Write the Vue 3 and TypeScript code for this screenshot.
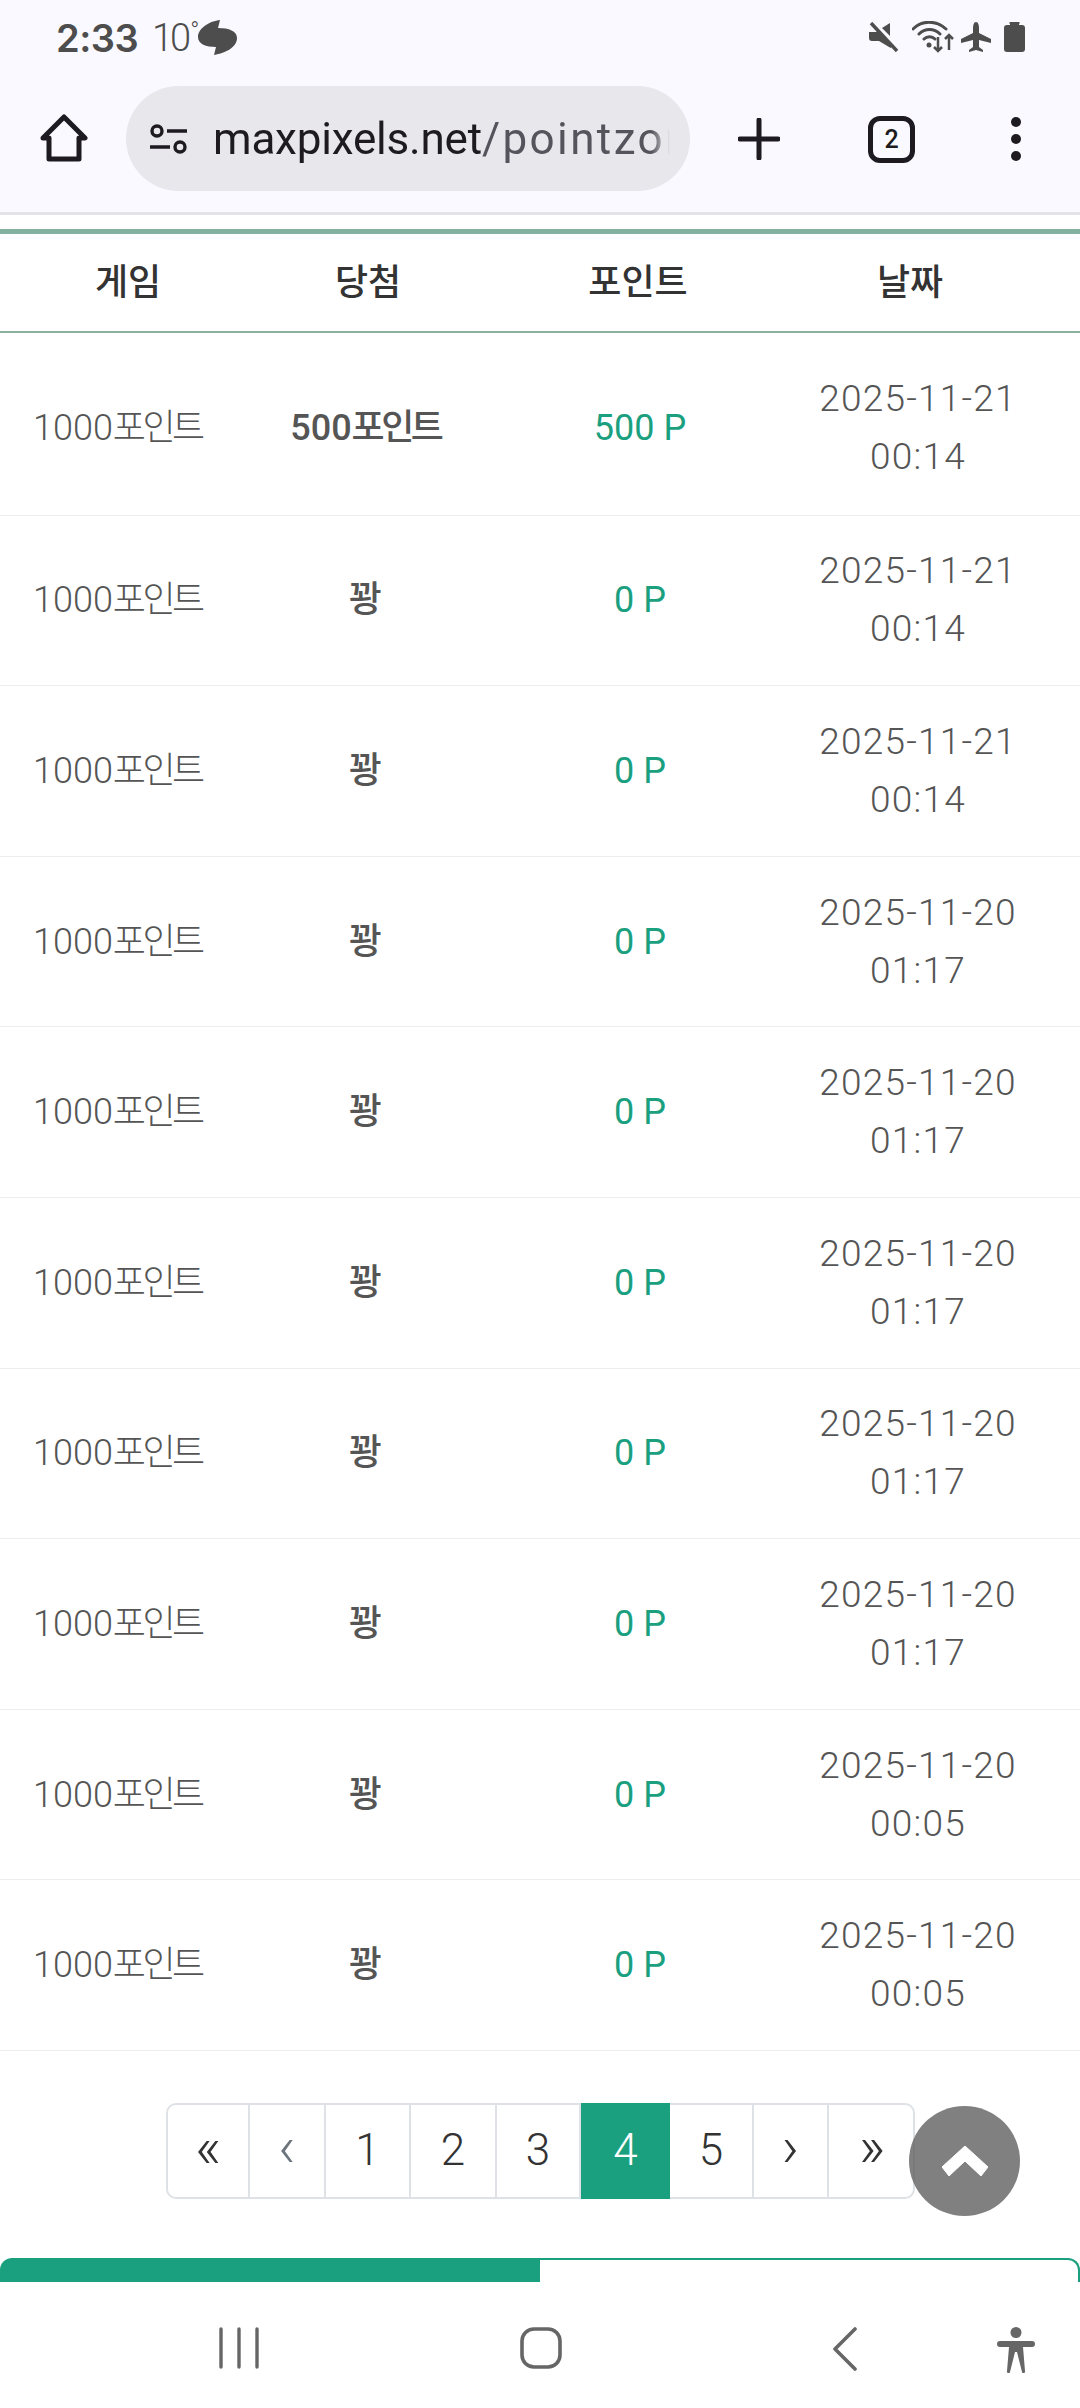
<script setup lang="ts">
interface Row { num: string; win: string; winUnit: string; point: string; date: string; time: string }
const dates: [string, string][] = [
  ['2025-11-21', '00:14'], ['2025-11-21', '00:14'], ['2025-11-21', '00:14'],
  ['2025-11-20', '01:17'], ['2025-11-20', '01:17'], ['2025-11-20', '01:17'],
  ['2025-11-20', '01:17'], ['2025-11-20', '01:17'], ['2025-11-20', '00:05'], ['2025-11-20', '00:05'],
]
const rows: Row[] = dates.map(([date, time], i) => ({
  num: '1000',
  win: i === 0 ? '500' : '꽝',
  winUnit: i === 0 ? '포인트' : '',
  point: i === 0 ? '500 P' : '0 P',
  date,
  time,
}))
const pages = [
  { label: '«', w: 82, arrow: true }, { label: '‹', w: 76, muted: true, arrow: true }, { label: '1', w: 85 }, { label: '2', w: 86 },
  { label: '3', w: 84 }, { label: '4', w: 89, active: true }, { label: '5', w: 84 }, { label: '›', w: 75, arrow: true }, { label: '»', w: 86, arrow: true },
]
</script>

<template>
  <div class="screen">
    <div class="status">
      <div class="status-left">
        <span class="clock">2:33</span>
        <span class="temp">10<sup>°</sup></span>
        <svg class="cloud" width="40" height="36" viewBox="0 0 40 36"><path fill="#4d4d4d" d="M22 0 C12 1 0 8 0 17 C0 24 8 27 18 27 L16 35 C28 33 39 27 39 18 C39 11 31 8 20 8 Z"/></svg>
      </div>
      <div class="status-right">
        <svg width="30" height="30" viewBox="0 0 30 30"><path fill="#4d4d4d" d="M0 10h7l3-2 12 13v5l-2-1-10-6H3a3 3 0 0 1-3-3z M21 1v13l-8-8z"/><path stroke="#4d4d4d" stroke-width="3.5" d="M2 1 L28 29"/></svg>
        <svg class="wifi" width="42" height="32" viewBox="0 0 42 32" fill="none" stroke="#4d4d4d"><path stroke-width="3" stroke-linecap="round" d="M1 8 C10 -1 24 -1 34 8 M7 13 C13 7 22 7 28 13 M12 18 C15 15 20 15 23 18"/><circle cx="17" cy="24" r="2.5" fill="#4d4d4d" stroke="none"/><path stroke-width="2.5" d="M26 16v14m-4-4 4 4 4-4M37 29V14m-4 4 4-4 4 4"/></svg>
        <svg class="plane" width="32" height="30" viewBox="0 0 32 30"><path fill="#4d4d4d" d="M16 0c2 0 3 3 3 6v5l12 6v4l-12-3v7l4 3v2l-7-2-7 2v-2l4-3v-7L1 21v-4l12-6V6c0-3 1-6 3-6z"/></svg>
        <svg class="battery" width="21" height="30" viewBox="0 0 21 30"><path fill="#4d4d4d" d="M6 2a1 1 0 0 1 1-2h7a1 1 0 0 1 1 2v1h3a3 3 0 0 1 3 3v21a3 3 0 0 1-3 3H3a3 3 0 0 1-3-3V6a3 3 0 0 1 3-3h3z"/></svg>
      </div>
    </div>

    <div class="toolbar">
      <svg class="home" width="48" height="48" viewBox="0 0 48 48" fill="none" stroke="#1d1b20" stroke-width="5" stroke-linejoin="round"><path d="M24 3 L45 24 H39 V45 H9 V24 H3 Z"/></svg>
      <div class="pill">
        <svg width="40" height="30" viewBox="0 0 40 30" fill="none" stroke="#1d1b20" stroke-width="3.4"><circle cx="8" cy="7" r="5"/><path d="M18 7h20M1 23h20"/><circle cx="31" cy="23" r="5"/></svg>
        <div class="url"><span class="host">maxpixels.net</span><span class="path">/pointzon</span></div>
      </div>
      <svg class="plus" width="42" height="42" viewBox="0 0 42 42"><path stroke="#1d1b20" stroke-width="5" stroke-linecap="round" d="M21 2v38M2 21h38"/></svg>
      <div class="tabs-count">2</div>
      <svg class="dots" width="12" height="44" viewBox="0 0 12 44"><circle cx="6" cy="5" r="5" fill="#1d1b20"/><circle cx="6" cy="22" r="5" fill="#1d1b20"/><circle cx="6" cy="39" r="5" fill="#1d1b20"/></svg>
    </div>

    <main class="main">
      <div class="table">
        <div class="thead">
          <div class="th th1">게임</div>
          <div class="th th2">당첨</div>
          <div class="th th3">포인트</div>
          <div class="th th4">날짜</div>
        </div>
        <div v-for="(r, i) in rows" :key="i" class="tr" :class="{ first: i === 0 }">
          <div class="td">{{ r.num }}<span class="unit">포인트</span></div>
          <div class="td strong">{{ r.win }}<span class="unit">{{ r.winUnit }}</span></div>
          <div class="td green">{{ r.point }}</div>
          <div class="td date">{{ r.date }}<br />{{ r.time }}</div>
        </div>
      </div>

      <nav class="pager">
        <div
          v-for="p in pages"
          :key="p.label"
          class="page"
          :class="{ active: p.active, muted: p.muted, arrow: p.arrow }"
          :style="{ width: p.w + 'px' }"
        ><span>{{ p.label }}</span></div>
        <button class="top" type="button" aria-label="top">
          <svg width="46" height="30" viewBox="0 0 46 30"><path fill="#fff" d="M23 0 L46 21 L39 30 L23 15 L7 30 L0 21 Z" stroke="#fff" stroke-width="1" stroke-linejoin="round"/></svg>
        </button>
      </nav>

      <div class="tabs">
        <div class="tab on"></div>
        <div class="tab"></div>
      </div>
    </main>

    <div class="navbar">
      <svg class="n1" width="40" height="42" viewBox="0 0 40 42"><path stroke="#666" stroke-width="3.4" stroke-linecap="round" d="M2 2v38M20 2v38M38 2v38"/></svg>
      <svg class="n2" width="42" height="42" viewBox="0 0 42 42" fill="none"><rect x="2" y="2" width="38" height="38" rx="12" stroke="#666" stroke-width="3.6"/></svg>
      <svg class="n3" width="24" height="44" viewBox="0 0 24 44" fill="none"><path stroke="#666" stroke-width="3.6" stroke-linecap="round" stroke-linejoin="round" d="M22 2 L2 22 L22 42"/></svg>
      <svg class="n4" width="38" height="46" viewBox="0 0 38 46"><circle cx="19" cy="5.5" r="5.5" fill="#666"/><path fill="#666" d="M3 14h32a2.500 2.500 0 0 1 0 6H26l2 24a1.500 1.500 0 0 1-3 1l-5-20h-2l-5 20a1.500 1.500 0 0 1-3-1l2-24H3a2.500 2.500 0 0 1 0-6z"/></svg>
    </div>
  </div>
</template>

<style scoped>
.screen {
  width: 1080px;
  height: 2408px;
  display: flex;
  flex-direction: column;
  overflow: hidden;
  background: #fff;
  font-family: Roboto, "Noto Sans CJK KR", sans-serif;
}
.status {
  height: 70px;
  background: #f9f9ff;
  display: flex;
  justify-content: space-between;
  align-items: flex-start;
  padding: 20px 55px 0 56px;
  box-sizing: border-box;
}
.status-left { display: flex; align-items: center; height: 36px; color: #4d4d4d; }
.clock { font-size: 38px; font-weight: 600; font-family: Inter, Roboto, sans-serif; letter-spacing: -0.5px; line-height: 36px; width: 96px; }
.temp { font-size: 38px; font-weight: 300; line-height: 36px; width: 46px; letter-spacing: -3px; }
.temp sup { font-size: 24px; line-height: 0; vertical-align: 12px; margin-left: 2px; }
.cloud { display: block; }
.status-right { display: flex; align-items: center; padding-top: 1px; }
.wifi { margin-left: 13px; }
.plane { margin-left: 6px; }
.battery { margin-left: 12px; }
.toolbar {
  height: 142px;
  background: #f9f9ff;
  display: flex;
  align-items: center;
  padding: 0 0 4px 40px;
  box-sizing: border-box;
}
.home { margin-top: -2px; }
.pill {
  margin-left: 38px;
  width: 564px;
  height: 105px;
  border-radius: 53px;
  background: #e8e7ec;
  display: flex;
  align-items: center;
  padding-left: 23px;
  box-sizing: border-box;
  margin-top: -1px;
}
.url {
  margin-left: 24px;
  width: 457px;
  overflow: hidden;
  white-space: nowrap;
  font-size: 44px;
  line-height: 60px;
  font-family: Roboto, sans-serif;
  letter-spacing: -0.2px;
  -webkit-mask-image: linear-gradient(to right, #000 96%, transparent 100%);
  mask-image: linear-gradient(to right, #000 96%, transparent 100%);
}
.host { color: #1d1b20; }
.path { color: #55545c; letter-spacing: 2.4px; }
.plus { margin-left: 48px; }
.tabs-count {
  margin-left: 88px;
  width: 47px;
  height: 47px;
  box-sizing: border-box;
  border: 5px solid #1d1b20;
  border-radius: 12px;
  font-size: 25px;
  font-weight: 500;
  color: #1d1b20;
  display: flex;
  align-items: center;
  justify-content: center;
}
.dots { margin-left: 95px; }
.main {
  flex: 1;
  min-height: 0;
  overflow: hidden;
  border-top: 3px solid #e3e3e8;
  padding-top: 14px;
}
.table { border-top: 5px solid #83b2a0; }
.thead, .tr {
  display: grid;
  grid-template-columns: 238px 258px 288px 268px;
  align-items: center;
  text-align: center;
}
.thead { height: 97px; border-bottom: 2px solid #8ab0a0; padding-bottom: 0; }
.th { font-size: 36px; font-weight: 500; color: #333; margin-top: -8px; }
.th1 { padding-left: 18px; }
.th2 { padding-left: 2px; }
.th3 { padding-right: 4px; }
.th4 { padding-right: 16px; }
.tr { height: 170.6px; box-sizing: border-box; border-bottom: 1.5px solid #eceded; }
.tr.first { height: 182.6px; padding-top: 9px; }
.td { font-size: 36px; font-weight: 300; color: #555; line-height: 58px; }
.unit { letter-spacing: -3.6px; margin-right: 3.6px; }
.strong { font-weight: 500; }
.green { color: #1ba07f; font-weight: 400; }
.date { font-size: 37px; letter-spacing: 1.2px; }
.pager {
  display: flex;
  position: relative;
  width: 749px;
  height: 96px;
  margin: 52px 0 0 166px;
  box-sizing: border-box;
  border: 2px solid #dee2e6;
  border-radius: 10px;
}
.page {
  box-sizing: border-box;
  height: 92px;
  border-right: 2px solid #dee2e6;
  display: flex;
  align-items: center;
  justify-content: center;
  font-size: 44px;
  font-weight: 300;
  color: #333;
  flex: none;
}
.page span { position: relative; top: -1px; }
.page:last-of-type { border-right: 0; }
.page.arrow { font-size: 58px; line-height: 60px; }
.page.arrow span { top: -4px; }
.page.muted { color: #6c757d; }
.page.active { background: #1ba07f; color: #fff; height: 96px; margin: -2px 0; border-right: 0; }
.top {
  position: absolute;
  left: 741px;
  top: 1px;
  width: 111px;
  height: 110px;
  padding: 0;
  border: 0;
  border-radius: 50%;
  background: rgba(96, 96, 96, 0.8);
  display: flex;
  align-items: center;
  justify-content: center;
}
.tabs { display: flex; margin-top: 59px; height: 60px; }
.tab {
  width: 540px;
  box-sizing: border-box;
  border-top: 2px solid #1ba07f;
  border-right: 2px solid #1ba07f;
  border-top-right-radius: 12px;
}
.tab.on { background: #1ba07f; border-radius: 12px 0 0 0; border-right: 0; }
.navbar {
  height: 126px;
  flex: none;
  background: #fff;
  display: flex;
  align-items: flex-start;
  padding: 45px 0 0 219px;
  box-sizing: border-box;
}
.n2 { margin-left: 261px; }
.n3 { margin-left: 271px; }
.n4 { margin-left: 140px; }
</style>

<style>
html, body { margin: 0; padding: 0; background: #fff; }
</style>
